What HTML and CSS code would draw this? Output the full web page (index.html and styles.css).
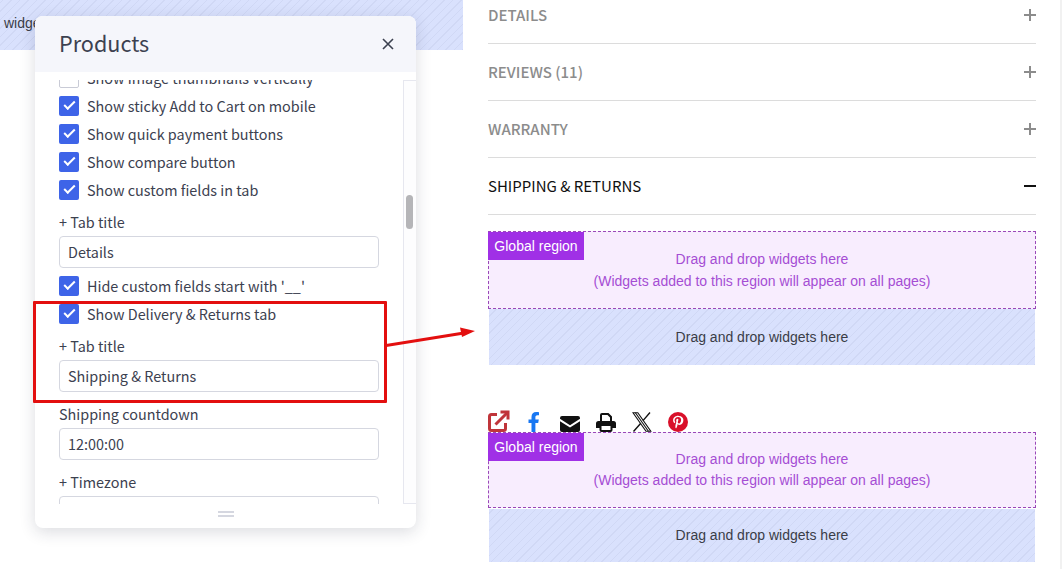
FILE: index.html
```html
<!DOCTYPE html>
<html lang="en">
<head>
    <meta charset="UTF-8">
    <meta name="viewport" content="width=device-width, initial-scale=1.0">
    <title>Products</title>
    <link rel="stylesheet" href="styles.css">
</head>
<body>

    <div class="page">
        <div class="left-col">
            <div class="hatch top-hatch">widgets here</div>
        </div>

        <div class="right-col">
            <div class="tabs">
                <div class="tab-row"><span>DETAILS</span><i class="plus"></i></div>
                <div class="tab-row"><span>REVIEWS (11)</span><i class="plus"></i></div>
                <div class="tab-row"><span>WARRANTY</span><i class="plus"></i></div>
                <div class="tab-row open"><span>SHIPPING &amp; RETURNS</span><i class="minus"></i></div>
            </div>

            <div class="region first-region">
                <div class="region-label">Global region</div>
                <p>Drag and drop widgets here</p>
                <p>(Widgets added to this region will appear on all pages)</p>
            </div>
            <div class="hatch drop-hatch">Drag and drop widgets here</div>

            <div class="share">
                <svg width="22" height="22" viewBox="0 0 22 22" fill="none" stroke="#c0353a" stroke-width="3">
                    <path d="M9 4.500H3.500a2 2 0 0 0-2 2V18.500a2 2 0 0 0 2 2H15.500a2 2 0 0 0 2-2V13"/>
                    <path d="M7.500 14.500 19 3"/>
                    <path d="M12.500 2H20V9.500"/>
                </svg>
                <svg class="fb" width="12" height="20" viewBox="0 0 12 20"><path fill="#1877f2" d="M3.500 20V11H.5V7.500h3V5c0-3.200 1.900-5 4.700-5 1.300 0 2.800.2 2.800.2v3H9.400C7.800 3.200 7.400 4.200 7.400 5.200v2.300h3.400l-.6 3.500H7.400v9z"/></svg>
                <svg width="20" height="16" viewBox="0 0 20 16"><path fill="#111" d="M2 0h16a2 2 0 0 1 2 2v.8l-10 6.400L0 2.800V2a2 2 0 0 1 2-2zM0 5.200l10 6.300 10-6.300V14a2 2 0 0 1-2 2H2a2 2 0 0 1-2-2z"/></svg>
                <svg width="20" height="19" viewBox="0 0 20 19"><path fill="#111" fill-rule="evenodd" d="M6 0h6.500L16 3.500V8h1.500A2.500 2.500 0 0 1 20 10.500V15h-3.500v2a2 2 0 0 1-2 2h-9a2 2 0 0 1-2-2v-2H0v-4.500A2.500 2.500 0 0 1 2.500 8H4V2a2 2 0 0 1 2-2zM6 2v6h8V4.500L11.500 2zM5.500 13v4h9v-4z"/></svg>
                <svg width="20" height="20" viewBox="0 0 20 20" fill="none" stroke="#111" stroke-width="1.100"><path d="M1 .7h4.800l13 18.600h-4.800z"/><path d="M3.400.7l13 18.600"/><path d="M18 .5 11 8.600M8.800 11.200 1.500 19.500" stroke-width="1.400"/></svg>
                <svg width="20" height="20" viewBox="0 0 20 20"><circle cx="10" cy="10" r="10" fill="#d9102a"/><path fill="#fff" d="M10.400 3.800c-3.500 0-5.300 2.300-5.300 4.500 0 1.300.5 2.400 1.500 2.800.2.100.3 0 .4-.2l.2-.6c0-.2 0-.3-.1-.5-.3-.4-.5-.8-.5-1.500 0-1.900 1.400-3.300 3.500-3.300 1.900 0 3 1.200 3 2.700 0 2-.9 3.700-2.200 3.700-.7 0-1.300-.6-1.100-1.300.2-.9.6-1.800.6-2.400 0-.6-.3-1-.9-1-.7 0-1.300.7-1.300 1.700 0 .6.200 1.100.2 1.100l-.9 3.600c-.2 1-.1 2.300 0 3 .6.200.8-.1.900-.2.300-.4.700-1.500.9-2.200l.4-1.600c.3.500 1 .9 1.800.9 2.300 0 3.900-2.100 3.900-4.900 0-2.100-1.800-4.100-4.500-4.100z"/></svg>
            </div>

            <div class="region second-region">
                <div class="region-label">Global region</div>
                <p>Drag and drop widgets here</p>
                <p>(Widgets added to this region will appear on all pages)</p>
            </div>
            <div class="hatch drop-hatch second-hatch">Drag and drop widgets here</div>
        </div>

        <div class="page-scroll"></div>
    </div>

    <!-- floating settings panel -->
    <div class="panel">
        <div class="panel-head">
            <h2>Products</h2>
            <svg class="close" width="12" height="12" viewBox="0 0 12 12" stroke="#3c4150" stroke-width="1.600"><path d="M1 1l10 10M11 1 1 11"/></svg>
        </div>
        <div class="panel-body">
            <div class="panel-scroll">
                <label class="check off"><b></b>Show image thumbnails vertically</label>
                <label class="check"><b></b>Show sticky Add to Cart on mobile</label>
                <label class="check"><b></b>Show quick payment buttons</label>
                <label class="check"><b></b>Show compare button</label>
                <label class="check"><b></b>Show custom fields in tab</label>

                <div class="field-label first-label">+ Tab title</div>
                <div class="input">Details</div>

                <label class="check after-input"><b></b>Hide custom fields start with '__'</label>
                <label class="check"><b></b>Show Delivery &amp; Returns tab</label>

                <div class="field-label first-label">+ Tab title</div>
                <div class="input">Shipping &amp; Returns</div>

                <div class="field-label countdown-label">Shipping countdown</div>
                <div class="input">12:00:00</div>

                <div class="field-label timezone-label">+ Timezone</div>
                <div class="input"></div>
            </div>
            <div class="panel-track"><div class="panel-thumb"></div></div>
        </div>
        <div class="panel-foot"><i></i></div>
    </div>

    <!-- red annotation over the screenshot -->
    <div class="note-box"></div>
    <svg class="note-arrow" width="92" height="22" viewBox="0 0 92 22">
        <path d="M0 18.500 78 6" stroke="#e30f0f" stroke-width="3" fill="none"/>
        <path d="M74 .5 89 4 76 10z" fill="#e30f0f"/>
    </svg>

</body>
</html>
```

FILE: styles.css
```css
/* Basic Styling */
body {
    font-family: "Liberation Sans", Arial, sans-serif;
    margin: 0;
    padding: 0;
    background-color: #fff;
    overflow: hidden;
}

p {
    margin: 0;
}

.page {
    display: flex;
    height: 569px;
    overflow: hidden;
}

.left-col {
    width: 463px;
    flex-shrink: 0;
}

.right-col {
    width: 548px;
    margin-left: 25px;
    flex-shrink: 0;
}

.page-scroll {
    width: 2px;
    margin-left: auto;
    background: #f1f1f1;
}

/* Hatched drop areas */
.hatch {
    background-color: #d9e1fd;
    background-image: repeating-linear-gradient(-45deg, #d0d8f5 0, #d0d8f5 1px, #d9e1fd 1px, #d9e1fd 6px);
    color: #3a3d47;
    font-size: 14px;
}

.top-hatch {
    height: 50px;
    padding: 15px 0 0 4px;
    box-sizing: border-box;
    line-height: 17px;
}

.drop-hatch {
    height: 56px;
    margin: 0 1px;
    display: flex;
    align-items: center;
    justify-content: center;
}

.second-hatch {
    height: 53px;
    margin-top: 1px;
    padding-bottom: 1px;
    box-sizing: border-box;
}

/* Accordion */
.tabs {
    margin-top: -13px;
}

.tab-row {
    height: 57px;
    box-sizing: border-box;
    border-bottom: 1px solid #dcdcdc;
    padding-bottom: 2px;
    display: flex;
    align-items: center;
    justify-content: space-between;
    font-family: "Noto Sans CJK SC", "Noto Sans", sans-serif;
    font-size: 15px;
    font-weight: 500;
    color: #8c8c8c;
}

.tab-row.open {
    color: #111;
    font-weight: 400;
}

.plus,
.minus {
    display: block;
    position: relative;
    width: 12px;
    height: 12px;
    margin-top: 2px;
}

.plus::before,
.minus::before {
    content: "";
    position: absolute;
    left: 0;
    right: 0;
    top: 5px;
    height: 2px;
    background: #8c8c8c;
}

.plus::after {
    content: "";
    position: absolute;
    top: 0;
    bottom: 0;
    left: 5px;
    width: 2px;
    background: #8c8c8c;
}

.minus::before {
    background: #111;
}

/* Global regions */
.region {
    position: relative;
    box-sizing: border-box;
    background: #f8edfe;
    border: 1px dashed #9a48b8;
    color: #a54dd4;
    font-size: 14px;
    text-align: center;
}

.first-region {
    height: 78px;
    margin-top: 16px;
    padding-top: 16px;
    line-height: 22px;
}

.second-region {
    height: 76px;
    padding-top: 16px;
    line-height: 21px;
}

.region-label {
    position: absolute;
    left: -1px;
    top: 0;
    width: 96px;
    height: 28px;
    line-height: 28px;
    background: #a030e6;
    color: #fff;
    text-align: center;
}

/* Share icons */
.share {
    height: 22px;
    margin-top: 46px;
    margin-bottom: -1px;
    display: flex;
    align-items: flex-end;
    position: relative;
}

.share svg {
    flex-shrink: 0;
    margin-right: 16px;
    margin-bottom: 1px;
}

.share svg:first-child {
    margin-right: 18px;
}

.share .fb {
    margin-right: 20px;
}

/* Settings panel */
.panel {
    position: absolute;
    left: 35px;
    top: 16px;
    width: 381px;
    height: 512px;
    background: #fff;
    border-radius: 8px;
    box-shadow: 0 4px 16px rgba(30, 35, 60, 0.16);
    font-family: "Noto Sans CJK SC", "Noto Sans", sans-serif;
    font-size: 14.4px;
    color: #3c4150;
    display: flex;
    flex-direction: column;
    overflow: hidden;
}

.panel-head {
    height: 56px;
    flex-shrink: 0;
    background: #f5f6fb;
    display: flex;
    align-items: center;
    justify-content: space-between;
    padding: 0 22px 0 24px;
}

.panel-head h2 {
    margin: -3px 0 0;
    font-size: 21.6px;
    font-weight: 400;
    color: #3c4150;
}

.panel-body {
    height: 432px;
    flex-shrink: 0;
    display: flex;
    padding-top: 8px;
    box-sizing: border-box;
}

.panel-scroll {
    flex: 1;
    overflow: hidden;
    padding: 0 24px;
    min-width: 0;
}

.check {
    display: flex;
    align-items: flex-start;
    height: 20px;
    line-height: 19px;
    margin-bottom: 8px;
    white-space: nowrap;
}

.check:first-child {
    margin-top: -12px;
}

.check b {
    display: block;
    width: 20px;
    height: 20px;
    margin-right: 8px;
    flex-shrink: 0;
    border-radius: 2px;
    background-color: #3e64e8;
    position: relative;
}

.check b::after {
    content: "";
    position: absolute;
    left: 5px;
    top: 5px;
    width: 9px;
    height: 4px;
    border-left: 2px solid #fff;
    border-bottom: 2px solid #fff;
    transform: rotate(-45deg);
}

.check.off b {
    background: #fff;
    border: 1px solid #c9cbd6;
    box-sizing: border-box;
}

.check.off b::after {
    display: none;
}

.field-label {
    height: 20px;
    line-height: 20px;
    margin-bottom: 4px;
}

.first-label {
    margin-top: 12px;
}

.countdown-label {
    margin-top: 12px;
}

.timezone-label {
    margin-top: 12px;
}

.input {
    height: 32px;
    box-sizing: border-box;
    border: 1px solid #d5d7e0;
    border-radius: 4px;
    padding: 0 8px;
    line-height: 30px;
    background: #fff;
}

.after-input {
    margin-top: 8px;
}

.panel-track {
    width: 13px;
    flex-shrink: 0;
    box-sizing: border-box;
    border: 1px solid #e6e7ef;
    border-right: 0;
    background: #fdfdfe;
    position: relative;
}

.panel-thumb {
    position: absolute;
    left: 2px;
    top: 114px;
    width: 7px;
    height: 34px;
    border-radius: 4px;
    background: #b5b5b8;
}

.panel-foot {
    flex: 1;
    display: flex;
    justify-content: center;
    padding-top: 7px;
}

.panel-foot i {
    display: block;
    width: 16px;
    height: 2px;
    border-top: 2px solid #d5d7e0;
    border-bottom: 2px solid #d5d7e0;
}

/* Annotation */
.note-box {
    position: absolute;
    left: 33px;
    top: 301px;
    width: 354px;
    height: 102px;
    box-sizing: border-box;
    border: 3px solid #e30f0f;
    border-radius: 1px;
}

.note-arrow {
    position: absolute;
    left: 386px;
    top: 327px;
}
```
